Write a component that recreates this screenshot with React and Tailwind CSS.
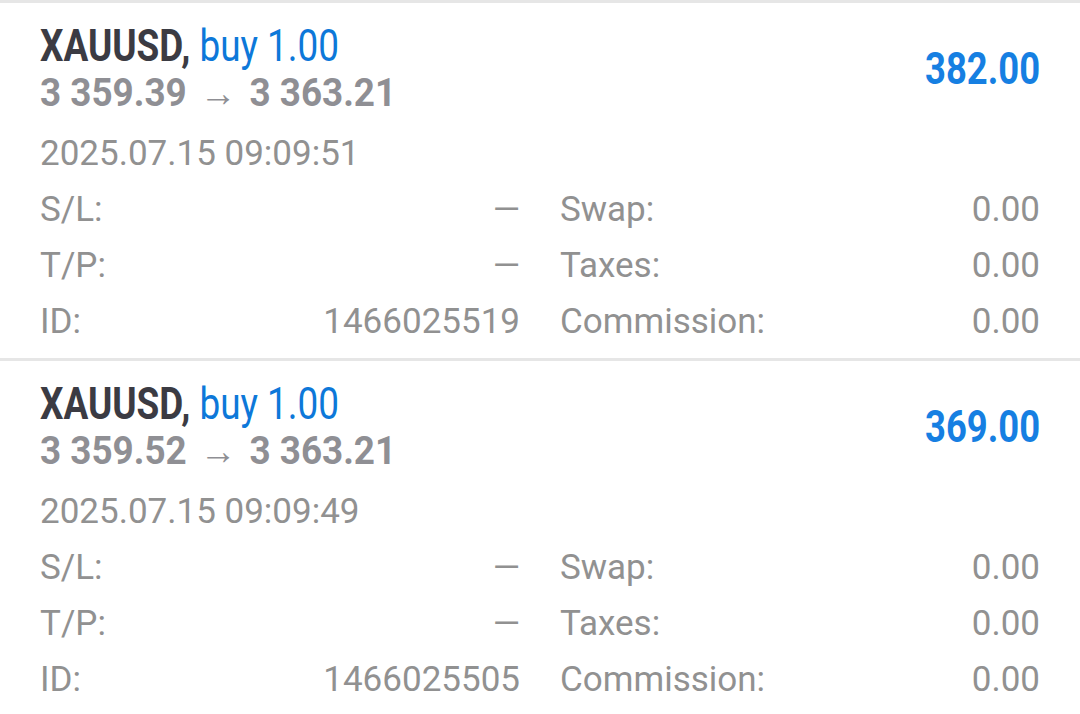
import React from "react";

const deals = [
  { open: "3 359.39", close: "3 363.21", profit: "382.00", time: "2025.07.15 09:09:51", id: "1466025519" },
  { open: "3 359.52", close: "3 363.21", profit: "369.00", time: "2025.07.15 09:09:49", id: "1466025505" },
];

function Row({ label, value }) {
  return (
    <div className="flex justify-between h-[56px] leading-[56px]">
      <span>{label}</span>
      <span>{value}</span>
    </div>
  );
}

function Deal({ d }) {
  return (
    <div className="border-t-[3px] border-[#e6e6e6] h-[358px] px-[40px] pt-[19px] overflow-hidden">
      <div className="flex justify-between items-start">
        <div>
          <div className="h-[48px] leading-[48px] text-[45px] whitespace-nowrap">
            <span className="inline-block origin-left scale-x-[0.82]">
              <span className="font-bold text-[#3b3b43]">XAUUSD,</span>{" "}
              <span className="font-normal text-[#0d78d9]">buy 1.00</span>
            </span>
          </div>
          <div className="mt-[4px] h-[38px] leading-[38px] text-[39px] font-bold text-[#8f8f94] whitespace-nowrap">
            <span className="inline-block origin-left scale-x-[0.945]">
              {d.open}
              <span className="font-normal mx-[4px]"> → </span>
              {d.close}
            </span>
          </div>
        </div>
        <div className="mt-[23px] h-[48px] leading-[48px] text-[45px] font-bold text-[#167fe2]">
          <span className="inline-block origin-right scale-x-[0.81]">{d.profit}</span>
        </div>
      </div>
      <div className="mt-[22px] h-[40px] leading-[40px] text-[35px] text-[#919191]">{d.time}</div>
      <div className="mt-[8px] grid grid-cols-2 gap-x-[40px] text-[35px] text-[#919191]">
        <div>
          <Row label="S/L:" value="—" />
          <Row label="T/P:" value="—" />
          <Row label="ID:" value={d.id} />
        </div>
        <div>
          <Row label="Swap:" value="0.00" />
          <Row label="Taxes:" value="0.00" />
          <Row label="Commission:" value="0.00" />
        </div>
      </div>
    </div>
  );
}

export default function App() {
  return (
    <div className="w-[1080px] h-[714px] overflow-hidden bg-white" style={{ fontFamily: "Roboto, 'Noto Sans', sans-serif" }}>
      {deals.map((d, i) => (
        <Deal key={i} d={d} />
      ))}
    </div>
  );
}
